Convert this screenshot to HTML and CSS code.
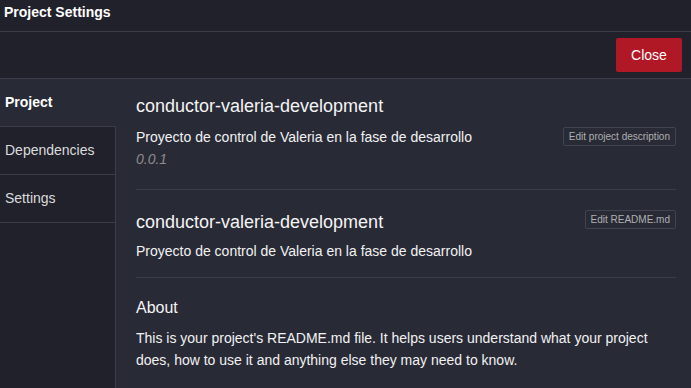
FILE: index.html
```html
<!DOCTYPE html>
<html lang="en">
<head>
<meta charset="utf-8">
<title>Project Settings</title>
<link rel="stylesheet" href="styles.css">
</head>
<body>
<div class="app">
  <header class="titlebar">Project Settings</header>
  <div class="toolbar">
    <button class="btn-close">Close</button>
  </div>
  <div class="main">
    <nav class="sidebar">
      <div class="nav-item active">Project</div>
      <div class="nav-item">Dependencies</div>
      <div class="nav-item">Settings</div>
    </nav>
    <main class="content">
      <section class="section section-info">
        <h2 class="project-name">conductor-valeria-development</h2>
        <div class="row row-desc">
          <p class="desc">Proyecto de control de Valeria en la fase de desarrollo</p>
          <button class="btn-edit">Edit project description</button>
        </div>
        <div class="version">0.0.1</div>
      </section>
      <section class="section section-readme-head">
        <div class="row row-title">
          <h2 class="project-name">conductor-valeria-development</h2>
          <button class="btn-edit btn-edit-top">Edit README.md</button>
        </div>
        <p class="desc desc-second">Proyecto de control de Valeria en la fase de desarrollo</p>
      </section>
      <section class="readme">
        <h3 class="readme-title">About</h3>
        <p class="readme-text">This is your project's README.md file. It helps users understand what your project does, how to use it and anything else they may need to know.</p>
      </section>
    </main>
  </div>
</div>
</body>
</html>
```

FILE: styles.css
```css
* { box-sizing: border-box; }

html, body {
  margin: 0;
  padding: 0;
  height: 100%;
}

body {
  font-family: "Liberation Sans", Arial, sans-serif;
  font-size: 14px;
  color: #f2f2f2;
  background: #21212b;
}

.app {
  height: 100vh;
  display: flex;
  flex-direction: column;
  overflow: hidden;
}

.titlebar {
  height: 32px;
  padding: 4px 4px 0;
  font-weight: bold;
  font-size: 14px;
  line-height: 16px;
  color: #ffffff;
  background: #21212b;
  border-bottom: 1px solid #3b3b49;
}

.toolbar {
  height: 47px;
  padding: 6px 9px 0 0;
  display: flex;
  justify-content: flex-end;
  align-items: flex-start;
  background: #21212b;
  border-bottom: 1px solid #3b3b49;
}

.btn-close {
  height: 34px;
  width: 66px;
  padding: 0;
  border: none;
  border-radius: 2px;
  background: #b01826;
  color: #ffffff;
  font-family: "Liberation Sans", Arial, sans-serif;
  font-size: 14px;
}

.main {
  flex: 1;
  display: flex;
  min-height: 0;
  background: #282a36;
}

.sidebar {
  width: 116px;
  flex: none;
  display: flex;
  flex-direction: column;
  background: #21212b;
  border-right: 1px solid #3b3b49;
}

.nav-item {
  height: 48px;
  padding: 0 5px 1px;
  display: flex;
  align-items: center;
  font-size: 14px;
  color: #dcdcdc;
  border-bottom: 1px solid #3b3b49;
}

.nav-item.active {
  margin-right: -1px;
  font-weight: bold;
  color: #ffffff;
  background: #282a36;
}

.content {
  flex: 1;
  padding: 0 15px 0 20px;
  min-width: 0;
}

.section {
  border-bottom: 1px solid #3b3d4b;
}

.section-info {
  padding: 16px 0 22px;
}

.section-readme-head {
  padding: 21px 0 18px;
}

.project-name {
  margin: 0;
  font-size: 18px;
  font-weight: normal;
  line-height: 22px;
  color: #f4f4f4;
}

.row {
  display: flex;
  justify-content: space-between;
}

.row-desc {
  margin-top: 10px;
  align-items: center;
}

.row-title {
  align-items: flex-start;
}

.desc {
  margin: 0;
  font-size: 14px;
  line-height: 16px;
  color: #f2f2f2;
}

.desc-second {
  margin-top: 10px;
}

.btn-edit {
  height: 19px;
  padding: 0 5px;
  border: 1px solid #41434f;
  border-radius: 2px;
  background: transparent;
  color: #b0b0b0;
  font-family: "Liberation Sans", Arial, sans-serif;
  font-size: 10px;
  line-height: 17px;
}

.btn-edit-top {
  margin-top: -1px;
}

.version {
  margin-top: 5px;
  font-size: 14px;
  line-height: 16px;
  font-style: italic;
  color: #8c8c8c;
}

.readme {
  padding-top: 21px;
}

.readme-title {
  margin: 0;
  font-size: 16px;
  font-weight: normal;
  line-height: 18px;
  color: #f4f4f4;
}

.readme-text {
  margin: 11px 0 0;
  font-size: 14px;
  line-height: 21.5px;
  color: #f2f2f2;
}
```
